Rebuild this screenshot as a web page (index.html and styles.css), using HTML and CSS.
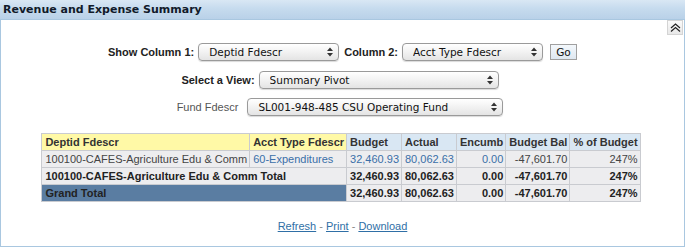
FILE: index.html
```html
<!DOCTYPE html>
<html lang="en">
<head>
    <meta charset="UTF-8">
    <title>Revenue and Expense Summary</title>
    <link rel="stylesheet" href="styles.css">
</head>
<body>
    <div class="panel">
        <div class="panel-header">Revenue and Expense Summary</div>
        <div class="panel-body">
            <div class="collapse-row">
                <span class="collapse-btn">
                    <svg width="11" height="9" viewBox="0 0 11 9"><path d="M1 5 L5.5 1 L10 5 M1 8.5 L5.5 4.5 L10 8.5" fill="none" stroke="#222" stroke-width="1.2"/></svg>
                </span>
            </div>

            <div class="form-row row-cols">
                <label class="lbl">Show Column 1:</label>
                <span class="sel sel-col">
                    <select><option>Deptid Fdescr</option></select>
                    <svg class="sel-arrow" width="6" height="10" viewBox="0 0 6 10"><path d="M0 4 L3 0.5 L6 4 Z M0 6 L3 9.5 L6 6 Z" fill="#333"/></svg>
                </span>
                <label class="lbl">Column 2:</label>
                <span class="sel sel-col">
                    <select><option>Acct Type Fdescr</option></select>
                    <svg class="sel-arrow" width="6" height="10" viewBox="0 0 6 10"><path d="M0 4 L3 0.5 L6 4 Z M0 6 L3 9.5 L6 6 Z" fill="#333"/></svg>
                </span>
                <button class="go-btn">Go</button>
            </div>

            <div class="form-row row-view">
                <label class="lbl">Select a View:</label>
                <span class="sel sel-view">
                    <select><option>Summary Pivot</option></select>
                    <svg class="sel-arrow" width="6" height="10" viewBox="0 0 6 10"><path d="M0 4 L3 0.5 L6 4 Z M0 6 L3 9.5 L6 6 Z" fill="#333"/></svg>
                </span>
            </div>

            <div class="form-row row-fund">
                <label class="lbl-plain">Fund Fdescr</label>
                <span class="sel sel-fund">
                    <select><option>SL001-948-485 CSU Operating Fund</option></select>
                    <svg class="sel-arrow" width="6" height="10" viewBox="0 0 6 10"><path d="M0 4 L3 0.5 L6 4 Z M0 6 L3 9.5 L6 6 Z" fill="#333"/></svg>
                </span>
            </div>

            <table class="pivot">
                <thead>
                    <tr>
                        <th class="dim c1">Deptid Fdescr</th>
                        <th class="dim c2">Acct Type Fdescr</th>
                        <th class="meas c3">Budget</th>
                        <th class="meas c4">Actual</th>
                        <th class="meas c5 num">Encumb</th>
                        <th class="meas c6">Budget Bal</th>
                        <th class="meas c7">% of Budget</th>
                    </tr>
                </thead>
                <tbody>
                    <tr>
                        <td>100100-CAFES-Agriculture Edu &amp; Comm</td>
                        <td><a href="#">60-Expenditures</a></td>
                        <td class="num"><a href="#">32,460.93</a></td>
                        <td class="num"><a href="#">80,062.63</a></td>
                        <td class="num"><a href="#">0.00</a></td>
                        <td class="num">-47,601.70</td>
                        <td class="num">247%</td>
                    </tr>
                    <tr class="total">
                        <td colspan="2">100100-CAFES-Agriculture Edu &amp; Comm Total</td>
                        <td class="num">32,460.93</td>
                        <td class="num">80,062.63</td>
                        <td class="num">0.00</td>
                        <td class="num">-47,601.70</td>
                        <td class="num">247%</td>
                    </tr>
                    <tr class="total grand">
                        <td colspan="2" class="grand-label">Grand Total</td>
                        <td class="num">32,460.93</td>
                        <td class="num">80,062.63</td>
                        <td class="num">0.00</td>
                        <td class="num">-47,601.70</td>
                        <td class="num">247%</td>
                    </tr>
                </tbody>
            </table>

            <div class="links">
                <a href="#">Refresh</a> - <a href="#">Print</a> - <a href="#">Download</a>
            </div>
        </div>
    </div>
</body>
</html>
```

FILE: styles.css
```css
body {
    margin: 0;
    background-color: #fff;
    font-family: "Liberation Sans", Arial, sans-serif;
    font-size: 11px;
    color: #333;
}
.panel {
    width: 685px;
    height: 247px;
    box-sizing: border-box;
    border: 1px solid #a9c7e0;
    border-top: none;
}
.panel-header {
    height: 19px;
    line-height: 20px;
    padding-left: 3px;
    margin: 0 -1px;
    background: linear-gradient(to bottom, #d9e7f4 0%, #c6dbee 45%, #b9d1e8 100%);
    border-bottom: 1px solid #a9c7e0;
    font-family: "DejaVu Sans", Verdana, sans-serif;
    font-size: 11px;
    font-weight: bold;
    color: #111a2a;
}
.panel-body {
    display: flex;
    flex-direction: column;
    align-items: center;
}
.collapse-row {
    align-self: stretch;
    display: flex;
    justify-content: flex-end;
    padding-right: 1px;
}
.collapse-btn {
    width: 14px;
    height: 13px;
    border: 1px solid #d4d4d4;
    background: linear-gradient(to bottom, #fafafa, #e8e8e8);
    display: flex;
    align-items: center;
    justify-content: center;
}
.form-row {
    display: flex;
    align-items: center;
    height: 18px;
}
.row-cols {
    margin-top: 8px;
}
.row-view {
    margin-top: 10px;
}
.row-fund {
    margin-top: 9px;
}
.lbl {
    font-weight: bold;
    color: #222;
    font-size: 11px;
}
.lbl-plain {
    color: #555;
    font-size: 11px;
}
.sel {
    position: relative;
    display: inline-block;
    height: 18px;
    margin: 0 5px 0 4px;
}
.sel select {
    -webkit-appearance: none;
    appearance: none;
    width: 100%;
    height: 18px;
    box-sizing: border-box;
    border: 1px solid #9a9a9a;
    border-radius: 4px;
    background: linear-gradient(to bottom, #ffffff 0%, #f2f2f2 50%, #e4e4e4 100%);
    padding: 0 18px 0 10px;
    font-family: "DejaVu Sans", Verdana, sans-serif;
    font-size: 10.5px;
    color: #111;
    box-shadow: 0 1px 1px rgba(0, 0, 0, 0.15);
}
.sel-arrow {
    position: absolute;
    right: 6px;
    top: 4px;
}
.sel-col {
    width: 141px;
}
.sel-view {
    width: 240px;
}
.sel-fund {
    width: 256px;
    margin-left: 9px;
}
.go-btn {
    height: 16px;
    width: 27px;
    padding: 0;
    margin-left: 2px;
    border: 1px solid #a0a0a0;
    background: linear-gradient(to bottom, #f4f8fc, #dfe8f1);
    font-family: "DejaVu Sans", Verdana, sans-serif;
    font-size: 10.5px;
    color: #111;
}
.pivot {
    margin-top: 17px;
    margin-right: 3px;
    width: 599px;
    border-collapse: collapse;
    border: 1px solid #c9cbd0;
}
.pivot th,
.pivot td {
    height: 16px;
    padding: 0 2px 0 3px;
    border: 1px solid #c9cbd0;
    white-space: nowrap;
    text-align: left;
}
.pivot .c1 { width: 200px; }
.pivot .c2 { width: 91px; }
.pivot .c3 { width: 48px; }
.pivot .c4 { width: 47px; }
.pivot .c5 { width: 46px; }
.pivot .c6 { width: 63px; }
.pivot .c7 { width: 62px; }
.pivot th {
    font-weight: bold;
    color: #333;
    border-bottom: 1px dotted #b8b8b8;
}
.pivot th.dim {
    background-color: #fff9a6;
}
.pivot th.meas {
    background-color: #d9e7f3;
}
.pivot th.num {
    text-align: right;
}
.pivot td {
    background-color: #ededef;
    color: #444;
}
.pivot td a {
    color: #3a6fa8;
    text-decoration: none;
}
.pivot td.num {
    text-align: right;
}
.pivot tr.total td {
    font-weight: bold;
    color: #222;
}
.pivot td.grand-label {
    background-color: #5a7da2;
    color: #fff;
}
.links {
    margin-top: 18px;
    color: #888;
    font-size: 11px;
}
.links a {
    color: #2f6fa6;
    text-decoration: underline;
}
```
